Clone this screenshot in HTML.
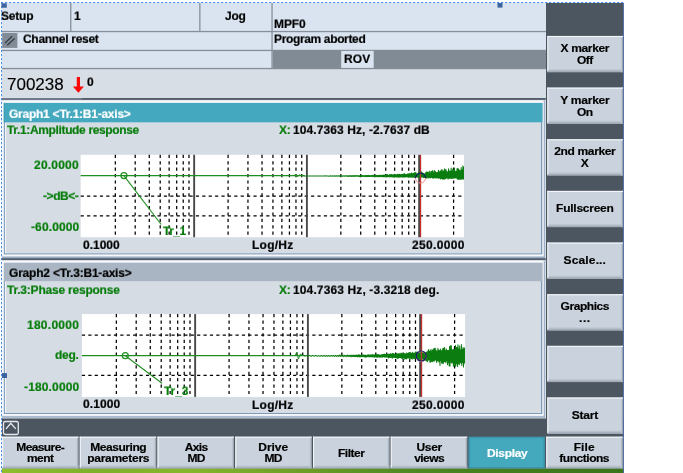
<!DOCTYPE html>
<html><head><meta charset="utf-8"><title>HMI</title>
<style>
html,body{margin:0;padding:0;background:#fff;}
body{width:683px;height:473px;position:relative;overflow:hidden;font-family:"Liberation Sans",sans-serif;font-weight:bold;font-size:12px;color:#000;}
.a{position:absolute;}
.t{position:absolute;white-space:nowrap;line-height:14px;height:14px;will-change:transform;transform:scaleY(0.95);transform-origin:0 11.2px;-webkit-text-stroke:0.2px currentColor;}
.bt>div{transform:scaleY(0.93);-webkit-text-stroke:0.2px currentColor;}
.bt{will-change:transform;position:absolute;display:flex;align-items:center;justify-content:center;text-align:center;line-height:12.5px;box-sizing:border-box;}
</style></head><body>
<svg class="a" style="left:0;top:0" width="683" height="473" viewBox="0 0 683 473">
<rect x="2" y="3" width="544.00" height="95.40" fill="#d9e4f0" />
<rect x="2" y="68.9" width="544.00" height="29.50" fill="#d8dee5" />
<rect x="70.1" y="3" width="1.30" height="28.30" fill="#868f99" />
<rect x="199.2" y="3" width="1.30" height="28.30" fill="#868f99" />
<rect x="271.4" y="3" width="1.30" height="65.30" fill="#868f99" />
<rect x="2" y="30.9" width="544.00" height="1.30" fill="#868f99" />
<rect x="2" y="49.8" width="544.00" height="1.30" fill="#868f99" />
<rect x="2" y="67.9" width="544.00" height="1.30" fill="#868f99" />
<rect x="272.7" y="50.3" width="273.30" height="18.00" fill="#818b95" />
<rect x="341.2" y="50.9" width="32.50" height="17.00" fill="#d9e4f0" />
<rect x="2.2" y="33" width="15.20" height="14.90" fill="#828c96" />
<path d="M5 43.1 L12.1 36.2 M7.2 45.3 L14.6 38.6" stroke="#353b43" stroke-width="1.3" fill="none"/>
<path d="M76.8 77 L80 77 L80 86.4 L83.9 86.4 L78.4 92.8 L72.9 86.4 L76.8 86.4 Z" fill="#fb0808"/>
<rect x="2" y="99.65" width="544.00" height="158.75" fill="#d5dce4" />
<rect x="2" y="100.55000000000001" width="541.80" height="155.55" fill="#f6f8fb" />
<rect x="543.8" y="100.55000000000001" width="1.20" height="157.45" fill="#9db2ca" />
<rect x="2" y="256.7" width="543.00" height="1.30" fill="#94abc6" />
<rect x="3.8" y="121.8" width="538.50" height="132.60" fill="#7f9ab8" />
<rect x="4.9" y="122.3" width="536.10" height="130.90" fill="#f6f8fb" />
<rect x="5.9" y="122.3" width="535.10" height="130.90" fill="#d5dce4" />
<rect x="3.8" y="102.9" width="538.80" height="19.40" fill="#44a8be" />
<rect x="2" y="98.0" width="543.80" height="1.90" fill="#525d6a" />
<rect x="2" y="98.0" width="80.00" height="1.90" fill="#6f7c8c" />
<rect x="3.8" y="102.9" width="1.00" height="19.40" fill="#3b98af" />
<rect x="2" y="259.8" width="544.00" height="158.20" fill="#d5dce4" />
<rect x="2" y="260.7" width="541.80" height="155.00" fill="#f6f8fb" />
<rect x="543.8" y="260.7" width="1.20" height="156.90" fill="#9db2ca" />
<rect x="2" y="416.29999999999995" width="543.00" height="1.30" fill="#94abc6" />
<rect x="3.8" y="280.7" width="538.50" height="133.30" fill="#7f9ab8" />
<rect x="4.9" y="281.2" width="536.10" height="131.60" fill="#f6f8fb" />
<rect x="5.9" y="281.2" width="535.10" height="131.60" fill="#d5dce4" />
<rect x="3.8" y="262.7" width="538.80" height="18.50" fill="#a9b5c2" />
<rect x="2" y="258.15000000000003" width="543.80" height="1.90" fill="#525d6a" />
</svg>
<div class="t" style="left:7px;top:74.8px;font-weight:normal;font-size:17px;line-height:20px;height:20px;transform:none;-webkit-text-stroke:0.15px #000">700238</div>
<div class="t" style="left:87.2px;top:75.2px;">0</div>
<div class="t" style="left:0.94px;top:9.44px;letter-spacing:-0.215px;color:#000">Setup</div>
<div class="t" style="left:73.83px;top:9.44px;letter-spacing:0px;color:#000">1</div>
<div class="t" style="left:225.15px;top:9.44px;letter-spacing:-0.277px;color:#000">Jog</div>
<div class="t" style="left:273.78px;top:17.04px;letter-spacing:-0.076px;color:#000">MPF0</div>
<div class="t" style="left:273.78px;top:32.14px;letter-spacing:-0.355px;color:#000">Program aborted</div>
<div class="t" style="left:343.98px;top:51.84px;letter-spacing:0.066px;color:#000">ROV</div>
<div class="t" style="left:22.73px;top:31.84px;letter-spacing:-0.292px;color:#000">Channel reset</div>
<div class="t" style="left:9.23px;top:106.54px;letter-spacing:-0.246px;color:#fff">Graph1 &lt;Tr.1:B1-axis&gt;</div>
<div class="t" style="left:7.09px;top:122.84px;letter-spacing:-0.353px;color:#077d0a">Tr.1:Amplitude response</div>
<div class="t" style="left:279.18px;top:122.84px;letter-spacing:-0.298px;color:#077d0a">X:</div>
<div class="t" style="left:292.53px;top:122.84px;letter-spacing:0.091px;color:#000">104.7363 Hz, -2.7637 dB</div>
<div class="t" style="left:34.25px;top:158.14px;letter-spacing:0.215px;color:#077d0a">20.0000</div>
<div class="t" style="left:43.22px;top:189.34px;letter-spacing:-0.431px;color:#077d0a">-&gt;dB&lt;-</div>
<div class="t" style="left:31.04px;top:220.44px;letter-spacing:0.115px;color:#077d0a">-60.0000</div>
<div class="t" style="left:82.84px;top:237.84px;letter-spacing:-0.017px;color:#000">0.1000</div>
<div class="t" style="left:251.88px;top:237.64px;letter-spacing:0.241px;color:#000">Log/Hz</div>
<div class="t" style="left:412.16px;top:237.84px;letter-spacing:0.339px;color:#000">250.0000</div>
<div class="t" style="left:9.33px;top:266.24px;letter-spacing:-0.201px;color:#000">Graph2 &lt;Tr.3:B1-axis&gt;</div>
<div class="t" style="left:6.99px;top:283.14px;letter-spacing:-0.214px;color:#077d0a">Tr.3:Phase response</div>
<div class="t" style="left:279.18px;top:282.84px;letter-spacing:-0.298px;color:#077d0a">X:</div>
<div class="t" style="left:292.53px;top:282.84px;letter-spacing:0.124px;color:#000">104.7363 Hz, -3.3218 deg.</div>
<div class="t" style="left:27.45px;top:318.04px;letter-spacing:0.259px;color:#077d0a">180.0000</div>
<div class="t" style="left:55.23px;top:348.44px;letter-spacing:-0.238px;color:#077d0a">deg.</div>
<div class="t" style="left:24.24px;top:379.84px;letter-spacing:0.15px;color:#077d0a">-180.0000</div>
<div class="t" style="left:82.74px;top:397.34px;letter-spacing:0.083px;color:#000">0.1000</div>
<div class="t" style="left:251.88px;top:397.54px;letter-spacing:0.241px;color:#000">Log/Hz</div>
<div class="t" style="left:412.36px;top:397.54px;letter-spacing:0.339px;color:#000">250.0000</div>
<svg class="a" style="left:0;top:0" width="683" height="473" viewBox="0 0 683 473">
<rect x="80.65" y="154.8" width="383.35" height="82.40" fill="#fff" />
<line x1="115.34" y1="154.8" x2="115.34" y2="237.2" stroke="#000" stroke-width="1.25" stroke-dasharray="3.2 3.2"/>
<line x1="135.20" y1="154.8" x2="135.20" y2="237.2" stroke="#000" stroke-width="1.25" stroke-dasharray="3.2 3.2"/>
<line x1="149.28" y1="154.8" x2="149.28" y2="237.2" stroke="#000" stroke-width="1.25" stroke-dasharray="3.2 3.2"/>
<line x1="160.21" y1="154.8" x2="160.21" y2="237.2" stroke="#000" stroke-width="1.25" stroke-dasharray="3.2 3.2"/>
<line x1="169.14" y1="154.8" x2="169.14" y2="237.2" stroke="#000" stroke-width="1.25" stroke-dasharray="3.2 3.2"/>
<line x1="176.68" y1="154.8" x2="176.68" y2="237.2" stroke="#000" stroke-width="1.25" stroke-dasharray="3.2 3.2"/>
<line x1="183.22" y1="154.8" x2="183.22" y2="237.2" stroke="#000" stroke-width="1.25" stroke-dasharray="3.2 3.2"/>
<line x1="188.99" y1="154.8" x2="188.99" y2="237.2" stroke="#000" stroke-width="1.25" stroke-dasharray="3.2 3.2"/>
<line x1="228.09" y1="154.8" x2="228.09" y2="237.2" stroke="#000" stroke-width="1.25" stroke-dasharray="3.2 3.2"/>
<line x1="247.95" y1="154.8" x2="247.95" y2="237.2" stroke="#000" stroke-width="1.25" stroke-dasharray="3.2 3.2"/>
<line x1="262.03" y1="154.8" x2="262.03" y2="237.2" stroke="#000" stroke-width="1.25" stroke-dasharray="3.2 3.2"/>
<line x1="272.96" y1="154.8" x2="272.96" y2="237.2" stroke="#000" stroke-width="1.25" stroke-dasharray="3.2 3.2"/>
<line x1="281.89" y1="154.8" x2="281.89" y2="237.2" stroke="#000" stroke-width="1.25" stroke-dasharray="3.2 3.2"/>
<line x1="289.43" y1="154.8" x2="289.43" y2="237.2" stroke="#000" stroke-width="1.25" stroke-dasharray="3.2 3.2"/>
<line x1="295.97" y1="154.8" x2="295.97" y2="237.2" stroke="#000" stroke-width="1.25" stroke-dasharray="3.2 3.2"/>
<line x1="301.74" y1="154.8" x2="301.74" y2="237.2" stroke="#000" stroke-width="1.25" stroke-dasharray="3.2 3.2"/>
<line x1="340.84" y1="154.8" x2="340.84" y2="237.2" stroke="#000" stroke-width="1.25" stroke-dasharray="3.2 3.2"/>
<line x1="360.70" y1="154.8" x2="360.70" y2="237.2" stroke="#000" stroke-width="1.25" stroke-dasharray="3.2 3.2"/>
<line x1="374.78" y1="154.8" x2="374.78" y2="237.2" stroke="#000" stroke-width="1.25" stroke-dasharray="3.2 3.2"/>
<line x1="385.71" y1="154.8" x2="385.71" y2="237.2" stroke="#000" stroke-width="1.25" stroke-dasharray="3.2 3.2"/>
<line x1="394.64" y1="154.8" x2="394.64" y2="237.2" stroke="#000" stroke-width="1.25" stroke-dasharray="3.2 3.2"/>
<line x1="402.18" y1="154.8" x2="402.18" y2="237.2" stroke="#000" stroke-width="1.25" stroke-dasharray="3.2 3.2"/>
<line x1="408.72" y1="154.8" x2="408.72" y2="237.2" stroke="#000" stroke-width="1.25" stroke-dasharray="3.2 3.2"/>
<line x1="414.49" y1="154.8" x2="414.49" y2="237.2" stroke="#000" stroke-width="1.25" stroke-dasharray="3.2 3.2"/>
<line x1="453.59" y1="154.8" x2="453.59" y2="237.2" stroke="#000" stroke-width="1.25" stroke-dasharray="3.2 3.2"/>
<line x1="80.65" y1="196.00" x2="464.0" y2="196.00" stroke="#000" stroke-width="1.25" stroke-dasharray="3.2 3.2"/>
<line x1="80.65" y1="215.90" x2="464.0" y2="215.90" stroke="#000" stroke-width="1.25" stroke-dasharray="3.2 3.2"/>
<line x1="194.15" y1="154.8" x2="194.15" y2="237.2" stroke="#484848" stroke-width="1.9"/>
<line x1="306.90" y1="154.8" x2="306.90" y2="237.2" stroke="#484848" stroke-width="1.9"/>
<line x1="419.15" y1="154.8" x2="419.15" y2="237.2" stroke="#484848" stroke-width="1.9"/>
<line x1="80.65" y1="175.6" x2="304.6" y2="175.6" stroke="#1f8f22" stroke-width="1.25"/>
<clipPath id="cp1"><rect x="80.65" y="154.8" width="383.35" height="82.40"/></clipPath>
<polyline clip-path="url(#cp1)" points="303.5,176.0 305.2,176.0 306.9,176.0 308.5,175.9 310.1,176.0 311.6,175.9 313.2,176.1 314.6,175.9 316.1,176.1 317.5,175.9 318.9,176.1 320.3,175.9 321.6,176.1 322.9,175.9 324.1,176.1 325.4,175.8 326.6,176.1 327.8,175.9 328.9,176.2 330.1,175.8 331.2,176.2 332.3,175.8 333.3,176.2 334.4,175.8 335.4,176.3 336.3,175.8 337.3,176.3 338.3,175.7 339.2,176.3 340.1,175.7 341.0,176.3 341.8,175.7 342.7,176.4 343.5,175.7 344.3,176.2 345.1,175.7 345.9,176.3 346.6,175.6 347.4,176.4 348.1,175.6 348.8,176.5 349.5,175.7 350.1,176.4 350.8,175.6 351.4,176.5 352.1,175.5 352.7,176.4 353.3,175.7 353.9,176.4 354.4,175.4 355.0,176.4 355.6,175.6 356.1,176.3 356.6,175.6 357.1,176.3 357.6,175.7 358.1,176.3 358.6,175.6 359.1,176.6 359.5,175.7 360.0,176.5 360.4,175.4 360.8,176.6 361.3,175.6 361.7,176.4 362.1,175.4 362.5,176.4 362.9,175.6 363.4,176.4 363.8,175.5 364.2,176.4 364.6,175.7 365.0,176.4 365.5,175.4 365.9,176.6 366.3,175.5 366.7,176.6 367.1,175.6 367.6,176.6 368.0,175.3 368.4,176.5 368.8,175.5 369.2,176.6 369.7,175.6 370.1,176.4 370.5,175.6 370.9,176.4 371.3,175.6 371.8,176.4 372.2,175.3 372.6,176.7 373.0,175.3 373.4,176.5 373.9,175.4 374.3,176.4 374.7,175.2 375.1,176.6 375.5,175.4 376.0,176.4 376.4,175.4 376.8,176.7 377.2,175.4 377.6,176.8 378.1,175.3 378.5,176.6 378.9,175.5 379.3,176.8 379.7,175.2 380.2,176.5 380.6,175.4 381.0,176.7 381.4,175.2 381.8,176.6 382.3,175.4 382.7,176.8 383.1,175.0 383.5,176.8 383.9,175.0 384.4,176.7 384.8,175.0 385.2,176.5 385.6,175.2 386.0,176.8 386.5,174.7 386.9,176.9 387.3,174.6 387.7,176.7 388.1,175.1 388.6,176.6 389.0,175.1 389.4,176.9 389.8,174.5 390.2,176.8 390.7,174.5 391.1,176.8 391.5,174.4 391.9,176.9 392.3,174.7 392.8,176.9 393.2,174.8 393.6,177.1 394.0,174.7 394.4,177.1 394.9,174.3 395.3,176.6 395.7,174.8 396.1,177.0 396.5,174.8 397.0,177.1 397.4,174.2 397.8,176.9 398.2,174.5 398.6,177.2 399.1,174.2 399.5,177.2 399.9,174.4 400.3,177.1 400.7,174.6 401.2,176.8 401.6,174.5 402.0,176.8 402.4,174.2 402.8,177.2 403.3,174.3 403.7,177.0 404.1,173.5 404.5,177.3 404.9,174.0 405.4,177.0 405.8,174.6 406.2,176.8 406.6,174.6 407.0,176.8 407.5,173.9 407.9,177.1 408.3,174.0 408.7,177.1 409.1,173.3 409.6,177.1 410.0,174.1 410.4,177.3 410.8,173.6 411.2,177.3 411.7,172.9 412.1,177.2 412.5,173.5 412.9,177.3 413.3,173.6 413.8,177.1 414.2,172.7 414.6,177.5 415.0,172.6 415.4,177.2 415.9,172.5 416.3,176.9 416.7,174.0 417.1,176.9 417.5,173.7 418.0,177.4 418.4,172.6 418.8,177.0 419.2,172.7 419.6,177.0 420.1,172.3 420.5,177.1 420.9,172.1 421.3,177.3 421.7,171.9 422.2,177.1 422.6,173.0 423.0,177.3 423.4,173.4 423.8,177.7 424.3,173.7 424.7,177.5 425.1,173.7 425.5,177.8 425.9,172.4 426.4,178.2 426.8,171.7 427.2,177.3 427.6,172.1 428.0,178.1 428.5,172.8 428.9,177.7 429.3,171.0 429.7,177.6 430.1,172.9 430.6,178.0 431.0,171.4 431.4,177.4 431.8,171.3 432.2,177.5 432.7,170.5 433.1,178.5 433.5,172.9 433.9,177.5 434.3,170.5 434.8,178.0 435.2,171.3 435.6,177.9 436.0,172.5 436.4,177.9 436.9,172.5 437.3,177.7 437.7,172.2 438.1,178.1 438.5,170.3 439.0,178.5 439.4,172.1 439.8,177.7 440.2,170.7 440.6,178.9 441.1,170.7 441.5,178.5 441.9,169.3 442.3,179.1 442.7,171.0 443.2,179.1 443.6,171.0 444.0,178.9 444.4,168.8 444.8,179.1 445.3,169.7 445.7,178.4 446.1,169.7 446.5,177.9 446.9,172.0 447.4,178.1 447.8,171.6 448.2,179.1 448.6,168.8 449.0,178.2 449.5,171.1 449.9,178.5 450.3,171.4 450.7,178.1 451.1,168.1 451.6,178.6 452.0,170.9 452.4,178.2 452.8,169.0 453.2,178.3 453.7,169.9 454.1,178.0 454.5,168.1 454.9,178.1 455.3,171.3 455.8,177.8 456.2,171.5 456.6,178.1 457.0,168.8 457.4,179.0 457.9,168.2 458.3,179.3 458.7,169.3 459.1,179.5 459.5,170.3 460.0,178.9 460.4,170.7 460.8,179.3 461.2,167.5 461.6,179.2 462.1,169.9 462.5,178.7 462.9,165.9 463.3,179.3 463.7,167.1 464.2,179.0 464.5,175.6" fill="none" stroke="#0b7d10" stroke-width="1.05" stroke-linejoin="round"/>
<line x1="123.9" y1="175.6" x2="161.2" y2="224.5" stroke="#1f8f22" stroke-width="1.1"/>
<circle cx="123.9" cy="175.6" r="3" fill="none" stroke="#1f8f22" stroke-width="1.2"/>
<polyline points="293.9,175.6 295.9,174.3 297.4,176.9 299.4,174.9 301.9,175.6" fill="none" stroke="#1f8f22" stroke-width="1"/>
<line x1="420.5" y1="154.8" x2="420.5" y2="237.2" stroke="#c03030" stroke-width="1.35"/>
<path d="M415.5 178.1 A5 5 0 0 0 425.5 178.1" fill="none" stroke="#f08a8a" stroke-width="1"/>
<path d="M415.5 178.1 A5 5 0 0 1 425.5 178.1" fill="none" stroke="#14206a" stroke-width="1.2"/>
<rect x="81.9" y="314.1" width="383.20" height="82.80" fill="#fff" />
<line x1="116.34" y1="314.1" x2="116.34" y2="396.9" stroke="#000" stroke-width="1.25" stroke-dasharray="3.2 3.2"/>
<line x1="136.20" y1="314.1" x2="136.20" y2="396.9" stroke="#000" stroke-width="1.25" stroke-dasharray="3.2 3.2"/>
<line x1="150.28" y1="314.1" x2="150.28" y2="396.9" stroke="#000" stroke-width="1.25" stroke-dasharray="3.2 3.2"/>
<line x1="161.21" y1="314.1" x2="161.21" y2="396.9" stroke="#000" stroke-width="1.25" stroke-dasharray="3.2 3.2"/>
<line x1="170.14" y1="314.1" x2="170.14" y2="396.9" stroke="#000" stroke-width="1.25" stroke-dasharray="3.2 3.2"/>
<line x1="177.68" y1="314.1" x2="177.68" y2="396.9" stroke="#000" stroke-width="1.25" stroke-dasharray="3.2 3.2"/>
<line x1="184.22" y1="314.1" x2="184.22" y2="396.9" stroke="#000" stroke-width="1.25" stroke-dasharray="3.2 3.2"/>
<line x1="189.99" y1="314.1" x2="189.99" y2="396.9" stroke="#000" stroke-width="1.25" stroke-dasharray="3.2 3.2"/>
<line x1="229.09" y1="314.1" x2="229.09" y2="396.9" stroke="#000" stroke-width="1.25" stroke-dasharray="3.2 3.2"/>
<line x1="248.95" y1="314.1" x2="248.95" y2="396.9" stroke="#000" stroke-width="1.25" stroke-dasharray="3.2 3.2"/>
<line x1="263.03" y1="314.1" x2="263.03" y2="396.9" stroke="#000" stroke-width="1.25" stroke-dasharray="3.2 3.2"/>
<line x1="273.96" y1="314.1" x2="273.96" y2="396.9" stroke="#000" stroke-width="1.25" stroke-dasharray="3.2 3.2"/>
<line x1="282.89" y1="314.1" x2="282.89" y2="396.9" stroke="#000" stroke-width="1.25" stroke-dasharray="3.2 3.2"/>
<line x1="290.43" y1="314.1" x2="290.43" y2="396.9" stroke="#000" stroke-width="1.25" stroke-dasharray="3.2 3.2"/>
<line x1="296.97" y1="314.1" x2="296.97" y2="396.9" stroke="#000" stroke-width="1.25" stroke-dasharray="3.2 3.2"/>
<line x1="302.74" y1="314.1" x2="302.74" y2="396.9" stroke="#000" stroke-width="1.25" stroke-dasharray="3.2 3.2"/>
<line x1="341.84" y1="314.1" x2="341.84" y2="396.9" stroke="#000" stroke-width="1.25" stroke-dasharray="3.2 3.2"/>
<line x1="361.70" y1="314.1" x2="361.70" y2="396.9" stroke="#000" stroke-width="1.25" stroke-dasharray="3.2 3.2"/>
<line x1="375.78" y1="314.1" x2="375.78" y2="396.9" stroke="#000" stroke-width="1.25" stroke-dasharray="3.2 3.2"/>
<line x1="386.71" y1="314.1" x2="386.71" y2="396.9" stroke="#000" stroke-width="1.25" stroke-dasharray="3.2 3.2"/>
<line x1="395.64" y1="314.1" x2="395.64" y2="396.9" stroke="#000" stroke-width="1.25" stroke-dasharray="3.2 3.2"/>
<line x1="403.18" y1="314.1" x2="403.18" y2="396.9" stroke="#000" stroke-width="1.25" stroke-dasharray="3.2 3.2"/>
<line x1="409.72" y1="314.1" x2="409.72" y2="396.9" stroke="#000" stroke-width="1.25" stroke-dasharray="3.2 3.2"/>
<line x1="415.49" y1="314.1" x2="415.49" y2="396.9" stroke="#000" stroke-width="1.25" stroke-dasharray="3.2 3.2"/>
<line x1="454.59" y1="314.1" x2="454.59" y2="396.9" stroke="#000" stroke-width="1.25" stroke-dasharray="3.2 3.2"/>
<line x1="81.9" y1="335.20" x2="465.1" y2="335.20" stroke="#000" stroke-width="1.25" stroke-dasharray="3.2 3.2"/>
<line x1="81.9" y1="375.40" x2="465.1" y2="375.40" stroke="#000" stroke-width="1.25" stroke-dasharray="3.2 3.2"/>
<line x1="195.15" y1="314.1" x2="195.15" y2="396.9" stroke="#484848" stroke-width="1.9"/>
<line x1="307.90" y1="314.1" x2="307.90" y2="396.9" stroke="#484848" stroke-width="1.9"/>
<line x1="420.15" y1="314.1" x2="420.15" y2="396.9" stroke="#484848" stroke-width="1.9"/>
<line x1="81.9" y1="355.7" x2="305.6" y2="355.7" stroke="#1f8f22" stroke-width="1.25"/>
<clipPath id="cp2"><rect x="81.9" y="314.1" width="383.20" height="82.80"/></clipPath>
<polyline clip-path="url(#cp2)" points="304.5,356.3 306.2,355.6 307.9,356.3 309.5,355.4 311.1,356.3 312.6,355.4 314.2,356.2 315.6,355.4 317.1,356.3 318.5,355.6 319.9,356.3 321.3,355.5 322.6,356.3 323.9,355.3 325.1,356.4 326.4,355.3 327.6,356.4 328.8,355.5 329.9,356.3 331.1,355.4 332.2,356.3 333.3,355.4 334.3,356.5 335.4,355.4 336.4,356.5 337.3,355.5 338.3,356.4 339.3,355.0 340.2,356.5 341.1,355.1 342.0,356.4 342.8,355.1 343.7,356.6 344.5,355.3 345.3,356.4 346.1,355.3 346.9,356.6 347.6,355.1 348.4,356.4 349.1,355.2 349.8,356.5 350.5,355.3 351.1,356.9 351.8,355.1 352.4,356.4 353.1,355.1 353.7,356.5 354.3,355.2 354.9,356.7 355.4,355.2 356.0,356.4 356.6,354.9 357.1,356.9 357.6,355.2 358.1,356.5 358.6,354.8 359.1,356.9 359.6,354.8 360.1,356.8 360.5,355.3 361.0,356.7 361.4,354.9 361.8,356.5 362.3,355.2 362.7,356.7 363.1,354.9 363.5,356.7 363.9,355.1 364.4,356.8 364.8,355.2 365.2,357.1 365.6,355.1 366.0,357.2 366.5,355.2 366.9,356.6 367.3,355.2 367.7,356.7 368.1,354.7 368.6,356.8 369.0,354.9 369.4,356.8 369.8,355.0 370.2,356.7 370.7,354.8 371.1,356.7 371.5,355.0 371.9,356.9 372.3,354.6 372.8,356.7 373.2,354.7 373.6,357.0 374.0,355.2 374.4,357.3 374.9,354.5 375.3,356.8 375.7,355.0 376.1,357.2 376.5,354.6 377.0,357.2 377.4,354.5 377.8,357.3 378.2,354.4 378.6,356.9 379.1,354.9 379.5,357.2 379.9,355.0 380.3,357.2 380.7,354.9 381.2,356.7 381.6,354.7 382.0,357.3 382.4,354.6 382.8,357.0 383.3,354.3 383.7,356.8 384.1,354.3 384.5,357.1 384.9,354.0 385.4,356.9 385.8,354.5 386.2,357.1 386.6,354.1 387.0,357.2 387.5,354.5 387.9,357.2 388.3,354.0 388.7,358.1 389.1,354.6 389.6,357.5 390.0,353.7 390.4,357.5 390.8,353.6 391.2,357.2 391.7,354.2 392.1,358.2 392.5,353.4 392.9,357.6 393.3,353.4 393.8,357.2 394.2,354.1 394.6,357.6 395.0,354.6 395.4,357.7 395.9,354.4 396.3,357.6 396.7,353.4 397.1,358.2 397.5,353.8 398.0,358.6 398.4,353.9 398.8,357.4 399.2,353.2 399.6,357.7 400.1,354.3 400.5,357.8 400.9,353.0 401.3,357.9 401.7,353.4 402.2,358.6 402.6,353.6 403.0,358.7 403.4,353.3 403.8,357.6 404.3,353.5 404.7,359.2 405.1,353.8 405.5,358.4 405.9,353.9 406.4,358.9 406.8,352.8 407.2,358.2 407.6,353.5 408.0,357.8 408.5,352.8 408.9,358.1 409.3,353.1 409.7,359.5 410.1,352.2 410.6,357.9 411.0,353.1 411.4,358.6 411.8,353.2 412.2,359.1 412.7,352.3 413.1,358.1 413.5,353.3 413.9,358.6 414.3,353.5 414.8,358.4 415.2,352.1 415.6,358.6 416.0,351.8 416.4,358.5 416.9,352.4 417.3,358.2 417.7,352.0 418.1,360.6 418.5,353.1 419.0,358.5 419.4,352.5 419.8,358.9 420.2,352.7 420.6,359.9 421.1,353.3 421.5,359.7 421.9,352.6 422.3,358.9 422.7,351.9 423.2,359.4 423.6,352.5 424.0,359.0 424.4,352.7 424.8,360.1 425.3,352.8 425.7,360.3 426.1,352.8 426.5,360.8 426.9,352.1 427.4,361.8 427.8,351.1 428.2,360.3 428.6,349.6 429.0,359.7 429.5,351.4 429.9,362.1 430.3,349.8 430.7,362.3 431.1,351.3 431.6,361.3 432.0,349.2 432.4,361.7 432.8,350.5 433.2,360.6 433.7,348.8 434.1,361.5 434.5,348.4 434.9,360.2 435.3,348.2 435.8,360.0 436.2,350.4 436.6,362.4 437.0,351.2 437.4,360.9 437.9,348.2 438.3,360.9 438.7,349.9 439.1,361.9 439.5,350.5 440.0,365.5 440.4,349.0 440.8,360.5 441.2,350.9 441.6,362.9 442.1,350.0 442.5,363.2 442.9,348.2 443.3,363.6 443.7,348.3 444.2,361.7 444.6,347.5 445.0,361.5 445.4,350.6 445.8,362.8 446.3,348.9 446.7,361.0 447.1,350.6 447.5,364.7 447.9,350.6 448.4,362.8 448.8,350.2 449.2,366.0 449.6,346.6 450.0,366.1 450.5,345.8 450.9,362.0 451.3,345.8 451.7,363.0 452.1,349.8 452.6,362.7 453.0,349.8 453.4,366.2 453.8,349.1 454.2,364.2 454.7,349.4 455.1,366.6 455.5,345.4 455.9,365.8 456.3,347.4 456.8,363.5 457.2,347.2 457.6,366.4 458.0,344.7 458.4,363.8 458.9,348.7 459.3,364.8 459.7,345.9 460.1,362.6 460.5,349.9 461.0,363.1 461.4,344.5 461.8,365.5 462.2,349.2 462.6,362.6 463.1,347.6 463.5,367.0 463.9,348.7 464.3,362.8 464.7,347.9 465.2,363.9 465.5,355.7" fill="none" stroke="#0b7d10" stroke-width="1.05" stroke-linejoin="round"/>
<line x1="125.3" y1="355.7" x2="162" y2="383.2" stroke="#1f8f22" stroke-width="1.1"/>
<circle cx="125.3" cy="355.7" r="3" fill="none" stroke="#1f8f22" stroke-width="1.2"/>
<polyline points="294.9,355.7 296.9,352.3 298.4,359.1 300.4,354.0 302.9,355.7" fill="none" stroke="#1f8f22" stroke-width="1"/>
<line x1="421.5" y1="314.1" x2="421.5" y2="396.9" stroke="#c03030" stroke-width="1.35"/>
<circle cx="421.3" cy="356.6" r="5" fill="none" stroke="#f08a8a" stroke-width="1"/>
<circle cx="421.3" cy="356" r="5" fill="none" stroke="#14206a" stroke-width="1.2"/>
</svg>
<div class="t" style="left:162.59px;top:224.24px;letter-spacing:-0.504px;color:#077d0a">Tr_1</div>
<div class="t" style="left:163.59px;top:384.04px;letter-spacing:-0.084px;color:#077d0a">Tr_3</div>

<!-- right dark panel & bottom bar -->
<svg class="a" style="left:0;top:0" width="683" height="473" viewBox="0 0 683 473">
<defs><linearGradient id="grass" x1="0" y1="0" x2="1" y2="0"><stop offset="0" stop-color="#8fbe2e"/><stop offset="0.15" stop-color="#7fb02a"/><stop offset="0.3" stop-color="#86b62c"/><stop offset="0.5" stop-color="#6a9c26"/><stop offset="0.65" stop-color="#4f8a22"/><stop offset="0.8" stop-color="#437e1f"/><stop offset="1" stop-color="#3a741c"/></linearGradient></defs>
<rect x="546" y="3" width="77.30" height="434.00" fill="#4c5661" />
<rect x="2" y="418.4" width="621.30" height="50.30" fill="#4c5661" />
<defs><linearGradient id="gb" x1="0" y1="0" x2="0" y2="1"><stop offset="0" stop-color="#cad3dd"/><stop offset="0.5" stop-color="#b3bdc8"/><stop offset="1" stop-color="#98a2ae"/></linearGradient><linearGradient id="gr" x1="0" y1="0" x2="1" y2="0"><stop offset="0" stop-color="#cad3dd" stop-opacity="0"/><stop offset="0.6" stop-color="#b0bac5"/><stop offset="1" stop-color="#8c96a2"/></linearGradient></defs>
<rect x="547.3" y="35.95" width="75.70" height="36.20" fill="#cad3dd" />
<rect x="547.3" y="68.55000000000001" width="75.70" height="3.60" fill="url(#gb)" />
<rect x="620.4" y="35.95" width="2.60" height="36.20" fill="url(#gr)" />
<rect x="547.3" y="35.95" width="75.70" height="1.10" fill="#f2f5f9" />
<rect x="547.3" y="35.95" width="1.10" height="35.20" fill="#f2f5f9" />
<rect x="547.3" y="87.6" width="75.70" height="36.20" fill="#cad3dd" />
<rect x="547.3" y="120.2" width="75.70" height="3.60" fill="url(#gb)" />
<rect x="620.4" y="87.6" width="2.60" height="36.20" fill="url(#gr)" />
<rect x="547.3" y="87.6" width="75.70" height="1.10" fill="#f2f5f9" />
<rect x="547.3" y="87.6" width="1.10" height="35.20" fill="#f2f5f9" />
<rect x="547.3" y="139.25" width="75.70" height="36.20" fill="#cad3dd" />
<rect x="547.3" y="171.85" width="75.70" height="3.60" fill="url(#gb)" />
<rect x="620.4" y="139.25" width="2.60" height="36.20" fill="url(#gr)" />
<rect x="547.3" y="139.25" width="75.70" height="1.10" fill="#f2f5f9" />
<rect x="547.3" y="139.25" width="1.10" height="35.20" fill="#f2f5f9" />
<rect x="547.3" y="190.89999999999998" width="75.70" height="36.20" fill="#cad3dd" />
<rect x="547.3" y="223.49999999999997" width="75.70" height="3.60" fill="url(#gb)" />
<rect x="620.4" y="190.89999999999998" width="2.60" height="36.20" fill="url(#gr)" />
<rect x="547.3" y="190.89999999999998" width="75.70" height="1.10" fill="#f2f5f9" />
<rect x="547.3" y="190.89999999999998" width="1.10" height="35.20" fill="#f2f5f9" />
<rect x="547.3" y="242.55" width="75.70" height="36.20" fill="#cad3dd" />
<rect x="547.3" y="275.15" width="75.70" height="3.60" fill="url(#gb)" />
<rect x="620.4" y="242.55" width="2.60" height="36.20" fill="url(#gr)" />
<rect x="547.3" y="242.55" width="75.70" height="1.10" fill="#f2f5f9" />
<rect x="547.3" y="242.55" width="1.10" height="35.20" fill="#f2f5f9" />
<rect x="547.3" y="294.2" width="75.70" height="36.20" fill="#cad3dd" />
<rect x="547.3" y="326.79999999999995" width="75.70" height="3.60" fill="url(#gb)" />
<rect x="620.4" y="294.2" width="2.60" height="36.20" fill="url(#gr)" />
<rect x="547.3" y="294.2" width="75.70" height="1.10" fill="#f2f5f9" />
<rect x="547.3" y="294.2" width="1.10" height="35.20" fill="#f2f5f9" />
<rect x="547.3" y="345.84999999999997" width="75.70" height="36.20" fill="#cad3dd" />
<rect x="547.3" y="378.44999999999993" width="75.70" height="3.60" fill="url(#gb)" />
<rect x="620.4" y="345.84999999999997" width="2.60" height="36.20" fill="url(#gr)" />
<rect x="547.3" y="345.84999999999997" width="75.70" height="1.10" fill="#f2f5f9" />
<rect x="547.3" y="345.84999999999997" width="1.10" height="35.20" fill="#f2f5f9" />
<rect x="547.3" y="397.5" width="75.70" height="36.20" fill="#cad3dd" />
<rect x="547.3" y="430.09999999999997" width="75.70" height="3.60" fill="url(#gb)" />
<rect x="620.4" y="397.5" width="2.60" height="36.20" fill="url(#gr)" />
<rect x="547.3" y="397.5" width="75.70" height="1.10" fill="#f2f5f9" />
<rect x="547.3" y="397.5" width="1.10" height="35.20" fill="#f2f5f9" />
<rect x="2.0" y="436.7" width="76.40" height="31.90" fill="#cad3dd" />
<rect x="2.0" y="465.0" width="76.40" height="3.60" fill="url(#gb)" />
<rect x="75.80000000000001" y="436.7" width="2.60" height="31.90" fill="url(#gr)" />
<rect x="2.0" y="436.7" width="76.40" height="1.10" fill="#f2f5f9" />
<rect x="2.0" y="436.7" width="1.10" height="30.90" fill="#f2f5f9" />
<rect x="79.75" y="436.7" width="76.40" height="31.90" fill="#cad3dd" />
<rect x="79.75" y="465.0" width="76.40" height="3.60" fill="url(#gb)" />
<rect x="153.55" y="436.7" width="2.60" height="31.90" fill="url(#gr)" />
<rect x="79.75" y="436.7" width="76.40" height="1.10" fill="#f2f5f9" />
<rect x="79.75" y="436.7" width="1.10" height="30.90" fill="#f2f5f9" />
<rect x="157.5" y="436.7" width="76.40" height="31.90" fill="#cad3dd" />
<rect x="157.5" y="465.0" width="76.40" height="3.60" fill="url(#gb)" />
<rect x="231.3" y="436.7" width="2.60" height="31.90" fill="url(#gr)" />
<rect x="157.5" y="436.7" width="76.40" height="1.10" fill="#f2f5f9" />
<rect x="157.5" y="436.7" width="1.10" height="30.90" fill="#f2f5f9" />
<rect x="235.25" y="436.7" width="76.40" height="31.90" fill="#cad3dd" />
<rect x="235.25" y="465.0" width="76.40" height="3.60" fill="url(#gb)" />
<rect x="309.04999999999995" y="436.7" width="2.60" height="31.90" fill="url(#gr)" />
<rect x="235.25" y="436.7" width="76.40" height="1.10" fill="#f2f5f9" />
<rect x="235.25" y="436.7" width="1.10" height="30.90" fill="#f2f5f9" />
<rect x="313.0" y="436.7" width="76.40" height="31.90" fill="#cad3dd" />
<rect x="313.0" y="465.0" width="76.40" height="3.60" fill="url(#gb)" />
<rect x="386.79999999999995" y="436.7" width="2.60" height="31.90" fill="url(#gr)" />
<rect x="313.0" y="436.7" width="76.40" height="1.10" fill="#f2f5f9" />
<rect x="313.0" y="436.7" width="1.10" height="30.90" fill="#f2f5f9" />
<rect x="390.75" y="436.7" width="76.40" height="31.90" fill="#cad3dd" />
<rect x="390.75" y="465.0" width="76.40" height="3.60" fill="url(#gb)" />
<rect x="464.54999999999995" y="436.7" width="2.60" height="31.90" fill="url(#gr)" />
<rect x="390.75" y="436.7" width="76.40" height="1.10" fill="#f2f5f9" />
<rect x="390.75" y="436.7" width="1.10" height="30.90" fill="#f2f5f9" />
<rect x="468.5" y="436.7" width="76.40" height="31.90" fill="#3a97ad" />
<rect x="470.1" y="438.3" width="73.20" height="28.70" fill="#45a9be" />
<rect x="546.25" y="436.7" width="76.40" height="31.90" fill="#cad3dd" />
<rect x="546.25" y="465.0" width="76.40" height="3.60" fill="url(#gb)" />
<rect x="620.05" y="436.7" width="2.60" height="31.90" fill="url(#gr)" />
<rect x="546.25" y="436.7" width="76.40" height="1.10" fill="#f2f5f9" />
<rect x="546.25" y="436.7" width="1.10" height="30.90" fill="#f2f5f9" />
<rect x="3.5" y="421.5" width="14.8" height="13" rx="1.8" fill="none" stroke="#e6eaee" stroke-width="1.3"/><path d="M6 428.9 L10.8 423.4 L15.8 428.9" fill="none" stroke="#e6eaee" stroke-width="1.4"/>
<rect x="2" y="468.7" width="621.50" height="4.30" fill="url(#grass)" />
<rect x="623.2" y="3" width="0.80" height="470.00" fill="#3c5aa0" />
<line x1="1" y1="2.5" x2="624" y2="2.5" stroke="#4a8ce6" stroke-width="1" stroke-dasharray="2.3 1.7"/>
<line x1="1.5" y1="2" x2="1.5" y2="473" stroke="#4a8ce6" stroke-width="1" stroke-dasharray="2.3 1.7"/>
<rect x="1.5" y="3.3" width="5.30" height="4.40" fill="#3c64a0" />
<rect x="497.5" y="3" width="5.00" height="4.60" fill="#3c64a0" />
<rect x="2" y="373.1" width="5.00" height="4.90" fill="#3c64a0" />
</svg>
<div class="bt" style="left:547.3px;top:35.95px;width:75.7px;height:36.2px;"><div><span style="letter-spacing:-0.349px">X marker</span><br><span style="letter-spacing:-0.6px">Off</span></div></div>
<div class="bt" style="left:547.3px;top:87.60px;width:75.7px;height:36.2px;"><div><span style="letter-spacing:-0.238px">Y marker</span><br><span style="letter-spacing:-0.6px">On</span></div></div>
<div class="bt" style="left:547.3px;top:139.25px;width:75.7px;height:36.2px;"><div><span style="letter-spacing:-0.359px">2nd marker</span><br><span style="letter-spacing:0px">X</span></div></div>
<div class="bt" style="left:547.3px;top:190.90px;width:75.7px;height:36.2px;padding-bottom:1.6px;"><div><span style="letter-spacing:-0.255px">Fullscreen</span></div></div>
<div class="bt" style="left:547.3px;top:242.55px;width:75.7px;height:36.2px;padding-bottom:1.6px;"><div><span style="letter-spacing:0.136px">Scale...</span></div></div>
<div class="bt" style="left:547.3px;top:294.20px;width:75.7px;height:36.2px;"><div><span style="letter-spacing:-0.436px">Graphics</span><br><span style="letter-spacing:0.5px">...</span></div></div>
<div class="bt" style="left:547.3px;top:345.85px;width:75.7px;height:36.2px;padding-bottom:1.6px;"><div></div></div>
<div class="bt" style="left:547.3px;top:397.50px;width:75.7px;height:36.2px;padding-bottom:1.6px;"><div><span style="letter-spacing:-0.202px">Start</span></div></div>
<div class="bt" style="left:2.00px;top:436.7px;width:76.4px;height:31.9px;line-height:12.2px"><div><span style="letter-spacing:-0.6px">Measure-</span><br><span style="letter-spacing:-0.6px">ment</span></div></div>
<div class="bt" style="left:79.75px;top:436.7px;width:76.4px;height:31.9px;line-height:12.2px"><div><span style="letter-spacing:-0.432px">Measuring</span><br><span style="letter-spacing:-0.266px">parameters</span></div></div>
<div class="bt" style="left:157.50px;top:436.7px;width:76.4px;height:31.9px;line-height:12.2px"><div><span style="letter-spacing:-0.6px">Axis</span><br><span style="letter-spacing:-0.6px">MD</span></div></div>
<div class="bt" style="left:235.25px;top:436.7px;width:76.4px;height:31.9px;line-height:12.2px"><div><span style="letter-spacing:-0.036px">Drive</span><br><span style="letter-spacing:-0.6px">MD</span></div></div>
<div class="bt" style="left:313.00px;top:436.7px;width:76.4px;height:31.9px;padding-top:0.2px"><div><span style="letter-spacing:-0.489px">Filter</span></div></div>
<div class="bt" style="left:390.75px;top:436.7px;width:76.4px;height:31.9px;line-height:12.2px"><div><span style="letter-spacing:-0.336px">User</span><br><span style="letter-spacing:-0.52px">views</span></div></div>
<div class="bt" style="left:468.50px;top:436.7px;width:76.4px;height:31.9px;color:#fff;padding-top:0.2px"><div><span style="letter-spacing:-0.324px">Display</span></div></div>
<div class="bt" style="left:546.25px;top:436.7px;width:76.4px;height:31.9px;line-height:12.2px"><div><span style="letter-spacing:0.088px">File</span><br><span style="letter-spacing:-0.472px">functions</span></div></div>

</body></html>
